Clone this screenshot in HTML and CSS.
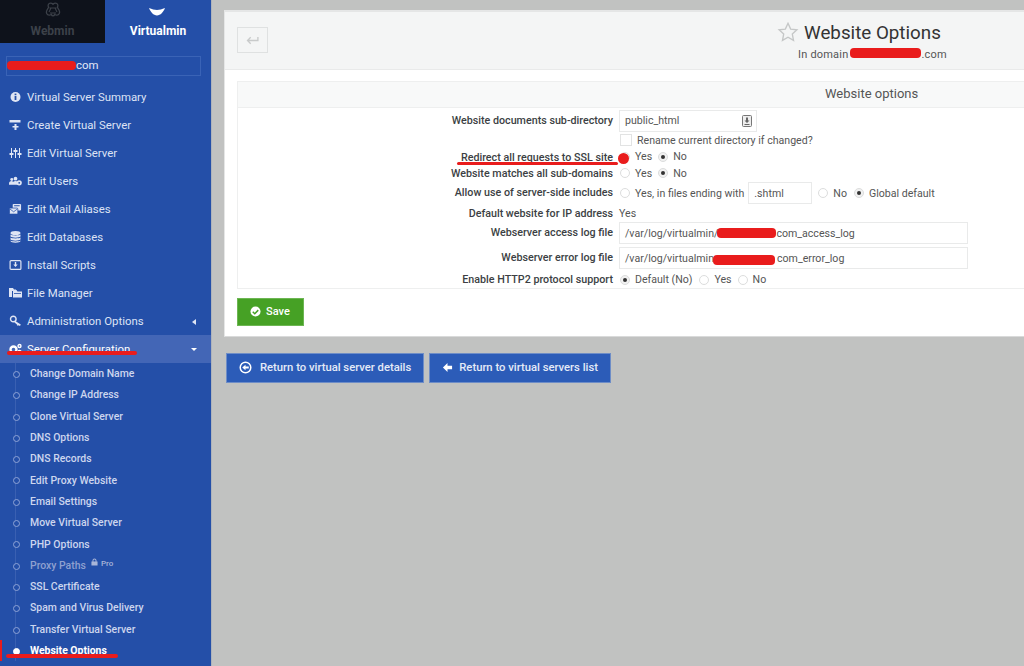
FILE: index.html
```html
<!DOCTYPE html>
<html lang="en">
<head>
<meta charset="utf-8">
<title>Website Options</title>
<link rel="stylesheet" href="styles.css">
</head>
<body>
<div class="app">
  <aside class="sidebar">
    <div class="tabs">
      <div class="tab tab-off">
        <svg class="tab-icon" viewBox="0 0 16 16"><path d="M5.500 1.200c1 0 1.800.4 2.500 1.100.7-.7 1.500-1.100 2.500-1.100 2 0 3.100 2.300 1.900 4l1.700 3c1.300 2.300.1 5-2.300 5-.9 0-1.500-.3-2-.8-.5 1-1.200 1.500-1.800 1.500s-1.300-.5-1.800-1.500c-.5.5-1.100.8-2 .8-2.400 0-3.600-2.700-2.300-5l1.700-3c-1.200-1.700-.1-4 1.900-4z" fill="none" stroke="#3c4149" stroke-width="1.300"/><path d="M4.500 6h7M6 6l-2 4M10 6l2 4M5 11h6" fill="none" stroke="#3c4149" stroke-width="1.100"/></svg>
        <span>Webmin</span>
      </div>
      <div class="tab tab-on">
        <svg class="tab-chevron" viewBox="0 0 16 8"><path d="M0 0c3 1.200 5.500 2 8 2s5-.8 8-2c-1.500 3.800-4.500 7.500-8 7.500S1.500 3.800 0 0z" fill="#fff"/></svg>
        <span>Virtualmin</span>
      </div>
    </div>
    <div class="domain"><span class="domain-text">com</span><i class="mark mark-domain"></i></div>
    <nav class="menu">
      <a class="item"><svg class="ico" viewBox="0 0 12 12"><circle cx="6" cy="6" r="5" fill="#dfe5f4"/><rect x="5.100" y="5" width="1.800" height="4" fill="#244fa8"/><rect x="5.100" y="2.600" width="1.800" height="1.600" fill="#244fa8"/></svg>Virtual Server Summary</a>
      <a class="item"><svg class="ico" viewBox="0 0 12 12"><path d="M0 1h11v2.500H0zM5 5h2v2h2v1.500H7V11H5V8.500H3V7h2z" fill="#dfe5f4"/></svg>Create Virtual Server</a>
      <a class="item"><svg class="ico" viewBox="0 0 12 12"><path d="M1.500 1h1v10h-1zM5.500 1h1v10h-1zM9.500 1h1v10h-1z" fill="#dfe5f4"/><path d="M0 6h4v2H0zM4 3h4v2H4zM8 6h4v2H8z" fill="#dfe5f4"/></svg>Edit Virtual Server</a>
      <a class="item"><svg class="ico" viewBox="0 0 14 12"><circle cx="3" cy="4.500" r="1.600" fill="#dfe5f4"/><circle cx="7" cy="3.500" r="2" fill="#dfe5f4"/><path d="M0 9c0-2 1-3 3-3l2 1v3H0zM4 10c0-3 1-4 3-4s3 1 3 4z" fill="#dfe5f4"/><circle cx="11" cy="8" r="2.800" fill="#dfe5f4"/><circle cx="11" cy="8" r="1" fill="#244fa8"/></svg>Edit Users</a>
      <a class="item"><svg class="ico" viewBox="0 0 14 12"><rect x="4" y="0.500" width="9" height="7" rx="1" fill="#dfe5f4"/><rect x="5.500" y="2" width="6" height="1" fill="#244fa8"/><rect x="0.500" y="5" width="9" height="6.500" rx="1" fill="#dfe5f4" stroke="#244fa8" stroke-width=".8"/><path d="M1 6l4 3 4-3" fill="none" stroke="#244fa8" stroke-width=".8"/></svg>Edit Mail Aliases</a>
      <a class="item"><svg class="ico" viewBox="0 0 12 12"><ellipse cx="6" cy="2" rx="5" ry="2" fill="#dfe5f4"/><path d="M1 3.500c1.500 1.200 8.500 1.200 10 0V5.500c-1.500 1.500-8.500 1.500-10 0zM1 6.500c1.500 1.200 8.500 1.200 10 0v2c-1.500 1.500-8.500 1.500-10 0zM1 9.500c1.500 1.200 8.500 1.200 10 0V10c0 2.300-10 2.300-10 0z" fill="#dfe5f4"/></svg>Edit Databases</a>
      <a class="item"><svg class="ico" viewBox="0 0 12 12"><rect x="0.600" y="1.600" width="10.800" height="8.800" rx="1" fill="none" stroke="#dfe5f4" stroke-width="1.200"/><path d="M5.300 3h1.400v2.500h1.500L6 8 3.800 5.500h1.500z" fill="#dfe5f4"/></svg>Install Scripts</a>
      <a class="item"><svg class="ico" viewBox="0 0 13 12"><path d="M0 1h4l1 1.500h2V4H3v6H0z" fill="#dfe5f4"/><path d="M4 3h3.500l1 1.500H13V10.500H4z" fill="#dfe5f4"/><rect x="5" y="6" width="7" height=".8" fill="#244fa8"/></svg>File Manager</a>
      <a class="item"><svg class="ico" viewBox="0 0 12 12"><circle cx="3.800" cy="4" r="2.800" fill="none" stroke="#dfe5f4" stroke-width="1.400"/><path d="M5.800 6l5.500 3.500-.8 1.500L9 10.200 8.200 11 7.400 9.500 5 7.500z" fill="#dfe5f4"/></svg>Administration Options<i class="caret caret-left"></i></a>
      <a class="item item-open"><svg class="ico" viewBox="0 0 13 12"><circle cx="4.500" cy="6.500" r="3" fill="none" stroke="#fff" stroke-width="2.400"/><circle cx="10.500" cy="3" r="1.500" fill="none" stroke="#fff" stroke-width="1.400"/><circle cx="10.500" cy="9" r="1.500" fill="none" stroke="#fff" stroke-width="1.400"/></svg>Server Configuration<i class="caret caret-down"></i><i class="mark mark-config"></i></a>
      <div class="sub">
        <a class="sub-item">Change Domain Name</a>
        <a class="sub-item">Change IP Address</a>
        <a class="sub-item">Clone Virtual Server</a>
        <a class="sub-item">DNS Options</a>
        <a class="sub-item">DNS Records</a>
        <a class="sub-item">Edit Proxy Website</a>
        <a class="sub-item">Email Settings</a>
        <a class="sub-item">Move Virtual Server</a>
        <a class="sub-item">PHP Options</a>
        <a class="sub-item sub-dim">Proxy Paths <svg class="lock" viewBox="0 0 8 9"><path d="M1.700 4V2.700a2.300 2.300 0 0 1 4.600 0V4H7.500v4.500H.5V4zM2.800 4h2.400V2.700a1.200 1.200 0 0 0-2.400 0z" fill="#a9b6d8"/></svg><span class="pro">Pro</span></a>
        <a class="sub-item">SSL Certificate</a>
        <a class="sub-item">Spam and Virus Delivery</a>
        <a class="sub-item">Transfer Virtual Server</a>
        <a class="sub-item sub-active">Website Options<i class="mark mark-website"></i></a>
      </div>
    </nav>
  </aside>
  <main class="main">
    <section class="panel">
      <header class="head">
        <button class="back"><svg viewBox="0 0 14 10"><path d="M13 1v4H2M5 1.500L1.500 5 5 8.500" fill="none" stroke="#c8caca" stroke-width="1.500"/></svg></button>
        <div class="title-box">
          <div class="title"><svg class="star" viewBox="0 0 24 24"><path d="M12 2.500l2.900 6.300 6.800.8-5 4.700 1.300 6.800-6-3.400-6 3.400 1.300-6.800-5-4.700 6.800-.8z" fill="none" stroke="#c5c7c7" stroke-width="1.500"/></svg>Website Options</div>
          <div class="subtitle">In domain<span class="gap"></span>.com<i class="mark mark-title"></i></div>
        </div>
      </header>
      <div class="body">
        <div class="box">
          <div class="box-head">Website options</div>
          <div class="form">
            <div class="row row-input1"><label class="lab">Website documents sub-directory</label>
              <div class="val"><span class="input input-dir">public_html<svg class="file-ico" viewBox="0 0 10 12"><rect x=".5" y=".5" width="9" height="11" rx="1" fill="#eee" stroke="#777"/><path d="M4 2.500h2v3h1.500L5 8 2.500 5.500H4zM2.500 9h5v1h-5z" fill="#666"/></svg></span></div></div>
            <div class="row row-check"><label class="lab"></label>
              <div class="val"><i class="check"></i><span class="opt">Rename current directory if changed?</span></div></div>
            <div class="row row-ssl"><label class="lab">Redirect all requests to SSL site<i class="mark mark-ssl"></i></label>
              <div class="val"><i class="radio"></i><span class="opt">Yes</span><i class="radio on"></i><span>No</span><i class="mark mark-dot"></i></div></div>
            <div class="row row-sub"><label class="lab">Website matches all sub-domains</label>
              <div class="val"><i class="radio"></i><span class="opt">Yes</span><i class="radio on"></i><span>No</span></div></div>
            <div class="row row-ssi"><label class="lab">Allow use of server-side includes</label>
              <div class="val"><i class="radio"></i><span class="opt opt-tight">Yes, in files ending with</span><span class="input input-ext">.shtml</span><i class="radio"></i><span class="opt opt-wide">No</span><i class="radio on"></i><span>Global default</span></div></div>
            <div class="row row-def"><label class="lab">Default website for IP address</label>
              <div class="val"><span>Yes</span></div></div>
            <div class="row row-log1"><label class="lab">Webserver access log file</label>
              <div class="val"><span class="input input-log">/var/log/virtualmin/<span class="gap-a"></span>com_access_log<i class="mark mark-log1"></i></span></div></div>
            <div class="row row-log2"><label class="lab">Webserver error log file</label>
              <div class="val"><span class="input input-log">/var/log/virtualmin<span class="gap-b"></span>com_error_log<i class="mark mark-log2"></i></span></div></div>
            <div class="row row-http"><label class="lab">Enable HTTP2 protocol support</label>
              <div class="val"><i class="radio on"></i><span class="opt opt-wide">Default (No)</span><i class="radio"></i><span class="opt">Yes</span><i class="radio"></i><span>No</span></div></div>
          </div>
        </div>
        <button class="save"><svg viewBox="0 0 12 12"><circle cx="6" cy="6" r="5.500" fill="#fff"/><path d="M3 6.200l2.200 2.200L9 4.500" fill="none" stroke="#46a125" stroke-width="1.600"/></svg>Save</button>
      </div>
    </section>
    <div class="returns">
      <button class="ret"><svg class="ret-circle" viewBox="0 0 14 14"><circle cx="7" cy="7" r="5.700" fill="none" stroke="#fff" stroke-width="1.600"/><path d="M3.500 7L7 4v2h3.500v2H7v2z" fill="#fff"/></svg>Return to virtual server details</button>
      <button class="ret"><svg class="ret-arrow" viewBox="0 0 12 12"><path d="M1 6l5-5v3h5v4H6v3z" fill="#fff"/></svg>Return to virtual servers list</button>
    </div>
  </main>
</div>
</body>
</html>
```
FILE: styles.css
```css
* { box-sizing: border-box; }
html, body { margin: 0; height: 100%; }
body { font-family: Roboto, "Liberation Sans", sans-serif; font-size: 10.6px; overflow: hidden; background: #c1c2c1; color: #444; }
i { display: block; font-style: normal; }
.app { display: flex; height: 666px; width: 1024px; overflow: hidden; }

.sidebar { position: relative; flex: 0 0 212px; background: #244fa8; border-right: 1px solid #aeb3bc; color: #d8dff2; }
.tabs { display: flex; height: 43px; }
.tab { display: flex; flex-direction: column; align-items: center; font-weight: 700; font-size: 12px; }
.tab-off { width: 105px; background: #0e121b; color: #3c4149; }
.tab-on { flex: 1; color: #fff; }
.tab-icon { width: 16px; height: 16px; margin-top: 2px; margin-bottom: 6px; }
.tab-chevron { width: 16px; height: 8px; margin-top: 8px; margin-bottom: 8px; margin-left: -2px; }
.domain { position: relative; margin: 13px 10px 0 6px; height: 20px; border: 1px solid #3a63b6; line-height: 17px; font-size: 11.4px; padding-left: 69px; color: #e3e8f6; }
.menu { margin-top: 7px; }
.item { position: relative; display: flex; align-items: center; height: 28px; padding: 0 0 1px 9px; font-size: 11.4px; color: #dde3f5; }
.ico { width: 13px; height: 12px; margin-right: 5px; flex: none; }
.item-open { background: #4366b6; color: #fff; }
.caret { position: absolute; right: 15px; top: 12px; width: 0; height: 0; border-style: solid; }
.caret-left { border-width: 3px 4px 3px 0; border-color: transparent #dfe5f4 transparent transparent; }
.caret-down { border-width: 3px 3px 0 3px; border-color: #fff transparent transparent transparent; right: 14px; top: 13px; }
.sub { position: relative; }
.sub::before { content: ""; position: absolute; left: 15px; top: 0; bottom: 0; width: 1px; background: #3a60b2; }
.sub-item { position: relative; display: flex; align-items: center; height: 21.3px; padding-left: 30px; font-size: 10.45px; font-weight: 500; color: #cdd6ee; }
.sub-item::before { content: ""; position: absolute; left: 13px; top: 8px; width: 5px; height: 5px; border-radius: 50%; border: 1px solid #8ea3d6; background: #244fa8; }
.sub-dim { color: #8fa1d0; }
.lock { width: 7px; height: 8px; margin: -6px 3px 0 5px; }
.pro { font-size: 8px; color: #a9b6d8; margin-top: -4px; }
.sub-active { color: #fff; font-weight: 700; }
.sub-active::before { background: #fff; border-color: #fff; }
.sub-active::after { content: ""; position: absolute; left: 0; top: 0; width: 2px; height: 21px; background: #e91c1c; }

.mark { position: absolute; background: #e91c1c; border-radius: 4px; }
.mark-domain { left: 0; top: 4px; width: 69px; height: 9px; }
.mark-config { left: 7px; top: 16px; width: 130px; height: 4px; }
.mark-website { left: 6px; top: 14px; width: 112px; height: 4px; }
.mark-title { left: 52px; top: 0; width: 71px; height: 10px; }
.mark-ssl { right: -5px; top: 14px; width: 161px; height: 3px; }
.mark-dot { left: -1px; top: 5px; width: 11px; height: 11px; border-radius: 50%; }
.mark-log1 { left: 97px; top: 5px; width: 59px; height: 10px; }
.mark-log2 { left: 93px; top: 7px; width: 62px; height: 10px; }

.main { flex: 1; min-width: 0; padding: 10px 0 0 12px; }
.panel { background: #fff; border-top: 2px solid #e5e6e6; border-left: 1px solid #e5e6e6; height: 327px; border-bottom: 1px solid #d9dada; }
.head { position: relative; height: 58px; background: #f4f5f5; border-bottom: 1px solid #e9eaea; padding: 15px 0 0 12px; }
.back { display: flex; align-items: center; justify-content: center; width: 31px; height: 26px; padding: 0; background: #f4f5f5; border: 1px solid #dfe1e1; }
.back svg { width: 13px; height: 9px; }
.title-box { position: absolute; left: 552px; top: 10px; }
.title { display: flex; align-items: center; font-size: 18.8px; line-height: 22px; color: #333; }
.star { width: 22px; height: 22px; margin-right: 5px; margin-top: -3px; }
.subtitle { position: relative; margin: 4px 0 0 21px; font-size: 11px; line-height: 13px; color: #555; letter-spacing: .2px; white-space: nowrap; }
.gap { display: inline-block; width: 73px; }
.body { padding: 11px 0 0 12px; }
.box { border: 1px solid #eeefef; border-right: 0; width: 787px; height: 208px; }
.box-head { height: 26px; background: #f8f9f9; border-bottom: 1px solid #eeefef; padding-left: 587px; font-size: 13px; line-height: 24px; color: #555; }
.form { padding-top: 2px; }
.row { display: flex; }
.lab { position: relative; flex: 0 0 375px; text-align: right; font-size: 10.72px; font-weight: 500; color: #3c3f44; }
.val { position: relative; display: flex; align-items: center; margin-left: 6px; color: #555; }
.row-input1 { height: 22px; } .row-input1 .lab { line-height: 22px; }
.row-check { height: 16px; }
.row-ssl { height: 17px; } .row-ssl .lab { line-height: 19px; }
.row-sub { height: 16px; } .row-sub .lab { line-height: 18px; }
.row-ssi { height: 22px; margin-top: 1px; } .row-ssi .lab { line-height: 22px; }
.row-def { height: 16px; margin-top: 1px; } .row-def .lab { line-height: 17px; }
.row-log1 { height: 22px; margin-top: 1px; } .row-log1 .lab { line-height: 22px; }
.row-log2 { height: 22px; margin-top: 3px; } .row-log2 .lab { line-height: 22px; }
.row-http { height: 17px; margin-top: 2px; } .row-http .lab { line-height: 18px; }
.input { position: relative; display: flex; align-items: center; height: 22px; border: 1px solid #e9eaea; padding-left: 5px; background: #fff; color: #555; }
.input-dir { width: 138px; padding-bottom: 2px; }
.file-ico { position: absolute; right: 4px; top: 4px; width: 10px; height: 12px; }
.input-ext { width: 64px; margin-right: 5px; }
.input-log { width: 349px; }
.gap-a { display: inline-block; width: 58px; }
.gap-b { display: inline-block; width: 63px; }
.check { width: 12px; height: 12px; border: 1px solid #e2e3e3; margin: 0 5px 0 1px; }
.radio { position: relative; width: 10px; height: 10px; margin-left: 1px; border: 1px solid #dcdddd; border-radius: 50%; margin-right: 5px; background: #fff; }
.radio.on { background: #f1f1f1; }
.radio.on::after { content: ""; position: absolute; left: 2px; top: 2px; width: 4px; height: 4px; border-radius: 50%; background: #333; }
.opt { margin-right: 5px; }
.opt-tight { margin-right: 4px; }
.opt-wide { margin-right: 6px; }
.save { display: flex; align-items: center; margin-top: 9px; width: 67px; height: 28px; padding: 0 0 1px 12px; background: #46a125; border: 1px solid #6db653; color: #fff; font: 500 11px Roboto, sans-serif; }
.save svg { width: 11px; height: 11px; margin-right: 5px; }
.returns { display: flex; gap: 5px; margin: 16px 0 0 2px; }
.ret { display: flex; align-items: center; height: 30px; padding: 0 12px 1px; background: #2c5cb8; border: 1px solid #6e8dc7; color: #e4eaf7; font: 500 11.25px Roboto, sans-serif; }
.ret-circle { width: 13px; height: 13px; margin-right: 8px; }
.ret-arrow { width: 11px; height: 11px; margin-right: 6px; }
```
